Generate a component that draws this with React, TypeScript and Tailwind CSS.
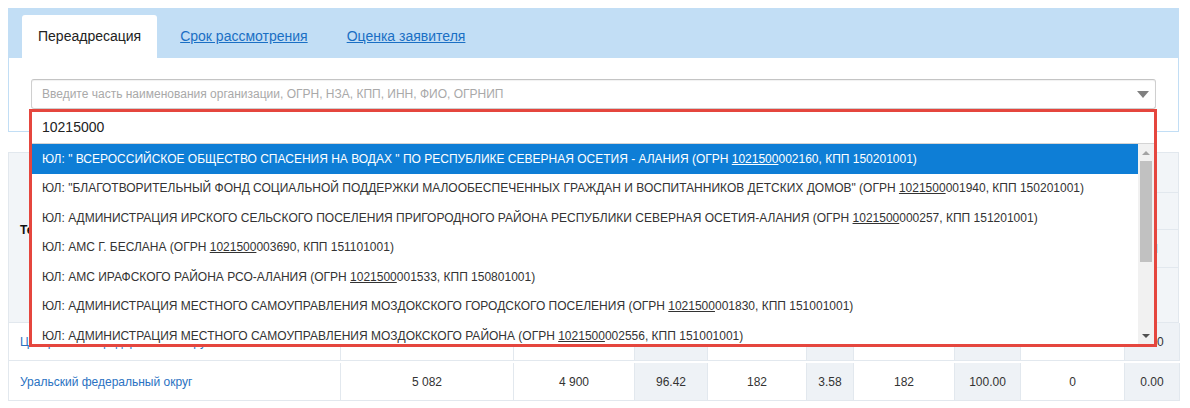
import React from 'react';

const orgs = [
  { name: 'ЮЛ: " ВСЕРОССИЙСКОЕ ОБЩЕСТВО СПАСЕНИЯ НА ВОДАХ " ПО РЕСПУБЛИКЕ СЕВЕРНАЯ ОСЕТИЯ - АЛАНИЯ', ogrn: '1021500002160', kpp: '150201001' },
  { name: 'ЮЛ: "БЛАГОТВОРИТЕЛЬНЫЙ ФОНД СОЦИАЛЬНОЙ ПОДДЕРЖКИ МАЛООБЕСПЕЧЕННЫХ ГРАЖДАН И ВОСПИТАННИКОВ ДЕТСКИХ ДОМОВ"', ogrn: '1021500001940', kpp: '150201001' },
  { name: 'ЮЛ: АДМИНИСТРАЦИЯ ИРСКОГО СЕЛЬСКОГО ПОСЕЛЕНИЯ ПРИГОРОДНОГО РАЙОНА РЕСПУБЛИКИ СЕВЕРНАЯ ОСЕТИЯ-АЛАНИЯ', ogrn: '1021500000257', kpp: '151201001' },
  { name: 'ЮЛ: АМС Г. БЕСЛАНА', ogrn: '1021500003690', kpp: '151101001' },
  { name: 'ЮЛ: АМС ИРАФСКОГО РАЙОНА РСО-АЛАНИЯ', ogrn: '1021500001533', kpp: '150801001' },
  { name: 'ЮЛ: АДМИНИСТРАЦИЯ МЕСТНОГО САМОУПРАВЛЕНИЯ МОЗДОКСКОГО ГОРОДСКОГО ПОСЕЛЕНИЯ', ogrn: '1021500001830', kpp: '151001001' },
  { name: 'ЮЛ: АДМИНИСТРАЦИЯ МЕСТНОГО САМОУПРАВЛЕНИЯ МОЗДОКСКОГО РАЙОНА', ogrn: '1021500002556', kpp: '151001001' },
];

const rows = [
  { region: 'Центральный федеральный округ', h: 'h-[40px] pb-[2px]', values: ['12 450', '12 011', '96.47', '439', '3.53', '439', '100.00', '0', '0.00'] },
  { region: 'Уральский федеральный округ', h: 'h-[38px]', values: ['5 082', '4 900', '96.42', '182', '3.58', '182', '100.00', '0', '0.00'] },
];

// shaded columns of the report table (value index)
const shaded = [2, 4, 6, 8];

function Tabs() {
  return (
    <div className="h-[50px] bg-[#c2def5] flex items-end pl-[14px] gap-[7px]">
      <div className="h-[43px] bg-white rounded-t-[3px] px-4 flex items-center text-[14px] text-[#222]">
        Переадресация
      </div>
      <a className="h-[43px] px-4 flex items-center text-[14px] text-[#1a6fc4] underline cursor-pointer">
        Срок рассмотрения
      </a>
      <a className="h-[43px] px-4 flex items-center text-[14px] text-[#1a6fc4] underline cursor-pointer">
        Оценка заявителя
      </a>
    </div>
  );
}

function OrgDropdown() {
  return (
    <div className="absolute top-[30px] -left-[2px] -right-[1px] z-10 border-[3px] border-[#e5463e] bg-white">
      <div className="h-[32px] border-b border-[#d4d4d4] pl-[10px] flex items-center text-[14px] text-[#222]">
        10215000
      </div>
      <div className="flex h-[200px]">
        <div className="flex-1 overflow-hidden">
          {orgs.map((o, i) => (
            <div
              key={i}
              className={
                i === 0
                  ? 'h-[29.5px] pl-[10px] flex items-center whitespace-nowrap text-[12px] bg-[#0e7ed6] text-white'
                  : 'h-[29.5px] pl-[10px] flex items-center whitespace-nowrap text-[12px] text-[#333]'
              }
            >
              {o.name} (ОГРН&nbsp;<span className="underline">{o.ogrn.slice(0, 7)}</span>
              {o.ogrn.slice(7)}, КПП {o.kpp})
            </div>
          ))}
        </div>
        <div className="w-[16px] bg-[#f1f1f1] flex flex-col">
          <div className="h-[17px] flex items-center justify-center">
            <div className="w-0 h-0 border-x-[4px] border-x-transparent border-b-[4px] border-b-[#a3a3a3]" />
          </div>
          <div className="h-[101px] mx-[2px] bg-[#c1c1c1]" />
          <div className="flex-1" />
          <div className="h-[17px] flex items-center justify-center">
            <div className="w-0 h-0 border-x-[4px] border-x-transparent border-t-[4px] border-t-[#505050]" />
          </div>
        </div>
      </div>
    </div>
  );
}

function Filter() {
  return (
    <div className="border-x border-b border-[#c2def5] bg-white px-[22px] pt-[21px] pb-[22px]">
      <div className="relative">
        <div className="h-[30px] border border-[#cfcfcf] border-t-[#c4c4c4] rounded-[3px] bg-white flex items-center pl-[10px] pr-[6px] shadow-[inset_0_1px_1px_rgba(0,0,0,0.06)]">
          <span className="flex-1 text-[12px] text-[#a9a9a9] truncate">
            Введите часть наименования организации, ОГРН, НЗА, КПП, ИНН, ФИО, ОГРНИП
          </span>
          <div className="w-0 h-0 border-x-[6px] border-x-transparent border-t-[7px] border-t-[#808080]" />
        </div>
        <OrgDropdown />
      </div>
    </div>
  );
}

function ReportTable() {
  return (
    <div className="mt-5 border-t border-l border-[#e2e8ee] text-[12px] text-[#333]">
      <div className="flex h-[170px] bg-[#f2f5f8]">
        <div className="w-[332px] border-r border-b border-[#e2e8ee] flex items-center pl-[11px] pb-[16px] font-bold text-[#111]">
          Территория
        </div>
        <div className="flex-1 flex flex-col border-r border-[#e2e8ee]">
          <div className="h-[40px] border-b border-[#e2e8ee]" />
          <div className="h-[37px] border-b border-[#e2e8ee]" />
          <div className="h-[38px] border-b border-[#e2e8ee] flex items-center justify-end pr-[20px] text-[#1a6fc4]">
            ЮЛ
          </div>
          <div className="flex-1 border-b border-[#e2e8ee]" />
        </div>
      </div>
      {rows.map((r) => (
        <div key={r.region} className={'grid grid-cols-[332px_173px_121px_73px_99px_47px_101px_66px_104px_55px] ' + r.h}>
          <div className="border-r border-b border-[#e2e8ee] flex items-center pl-[11px] text-[#2a72c2] whitespace-nowrap">
            {r.region}
          </div>
          {r.values.map((v, i) => (
            <div
              key={i}
              className={
                shaded.includes(i)
                  ? 'border-r border-b border-[#e2e8ee] bg-[#eef2f6] flex items-center justify-center'
                  : 'border-r border-b border-[#e2e8ee] flex items-center justify-center'
              }
            >
              {v}
            </div>
          ))}
        </div>
      ))}
    </div>
  );
}

export default function App() {
  return (
    <div className="w-[1190px] h-[408px] overflow-hidden bg-white pt-2 pl-2 pr-[11px] font-['Liberation_Sans',Arial,sans-serif]">
      <Tabs />
      <Filter />
      <ReportTable />
    </div>
  );
}
